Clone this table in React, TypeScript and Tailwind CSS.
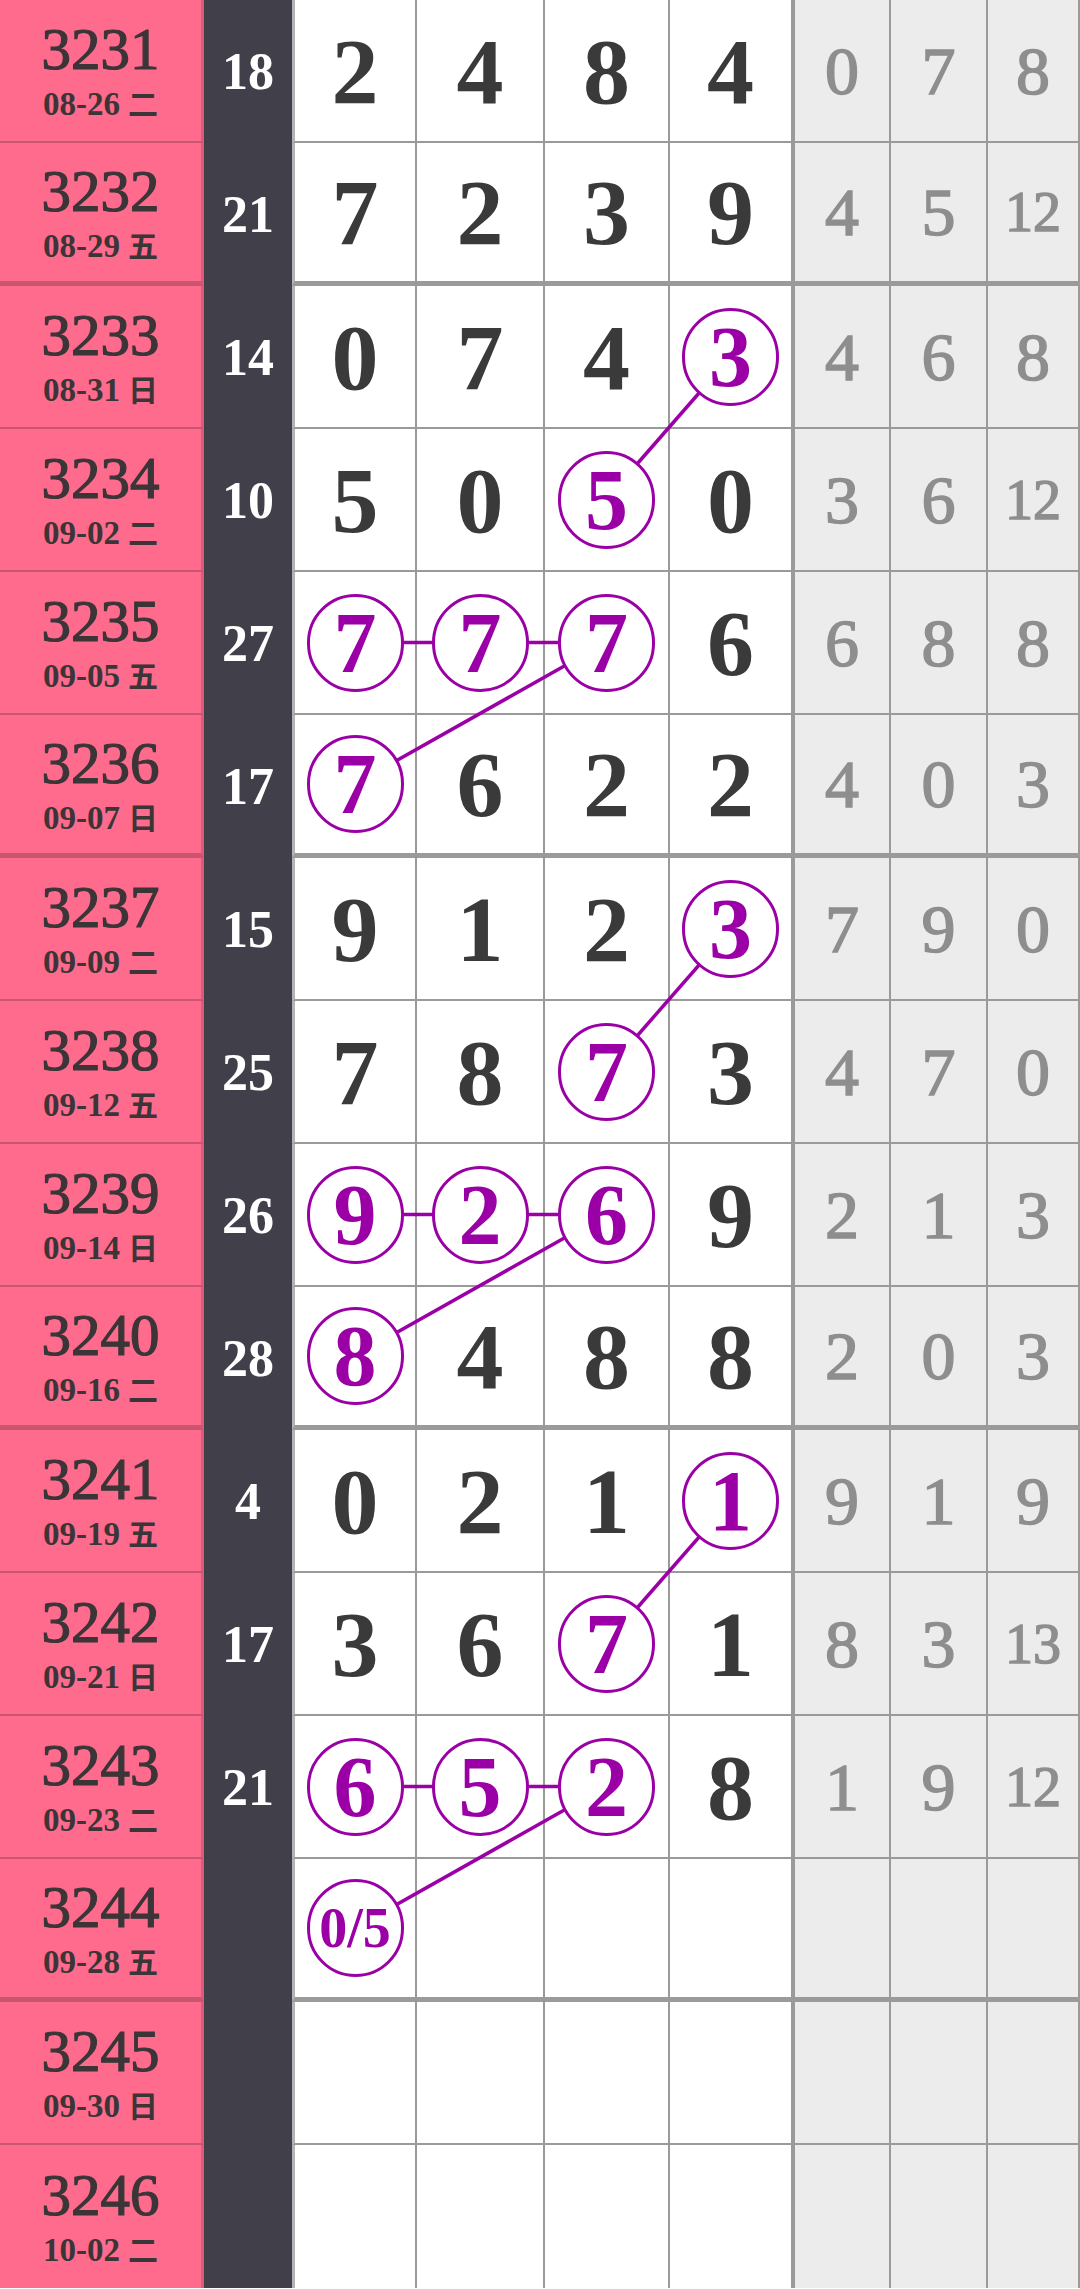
import React from "react";

type Row = { id: string; date: string; wd: string; s: string; d: string[]; g: string[] };

const rows: Row[] = [
  { id: "3231", date: "08-26", wd: "二", s: "18", d: ["2", "4", "8", "4"], g: ["0", "7", "8"] },
  { id: "3232", date: "08-29", wd: "五", s: "21", d: ["7", "2", "3", "9"], g: ["4", "5", "12"] },
  { id: "3233", date: "08-31", wd: "日", s: "14", d: ["0", "7", "4", "3"], g: ["4", "6", "8"] },
  { id: "3234", date: "09-02", wd: "二", s: "10", d: ["5", "0", "5", "0"], g: ["3", "6", "12"] },
  { id: "3235", date: "09-05", wd: "五", s: "27", d: ["7", "7", "7", "6"], g: ["6", "8", "8"] },
  { id: "3236", date: "09-07", wd: "日", s: "17", d: ["7", "6", "2", "2"], g: ["4", "0", "3"] },
  { id: "3237", date: "09-09", wd: "二", s: "15", d: ["9", "1", "2", "3"], g: ["7", "9", "0"] },
  { id: "3238", date: "09-12", wd: "五", s: "25", d: ["7", "8", "7", "3"], g: ["4", "7", "0"] },
  { id: "3239", date: "09-14", wd: "日", s: "26", d: ["9", "2", "6", "9"], g: ["2", "1", "3"] },
  { id: "3240", date: "09-16", wd: "二", s: "28", d: ["8", "4", "8", "8"], g: ["2", "0", "3"] },
  { id: "3241", date: "09-19", wd: "五", s: "4", d: ["0", "2", "1", "1"], g: ["9", "1", "9"] },
  { id: "3242", date: "09-21", wd: "日", s: "17", d: ["3", "6", "7", "1"], g: ["8", "3", "13"] },
  { id: "3243", date: "09-23", wd: "二", s: "21", d: ["6", "5", "2", "8"], g: ["1", "9", "12"] },
  { id: "3244", date: "09-28", wd: "五", s: "", d: ["0/5", "", "", ""], g: ["", "", ""] },
  { id: "3245", date: "09-30", wd: "日", s: "", d: ["", "", "", ""], g: ["", "", ""] },
  { id: "3246", date: "10-02", wd: "二", s: "", d: ["", "", "", ""], g: ["", "", ""] },
];

const circled: Record<string, boolean> = {
  "2-3": true,
  "3-2": true,
  "4-0": true,
  "4-1": true,
  "4-2": true,
  "5-0": true,
  "6-3": true,
  "7-2": true,
  "8-0": true,
  "8-1": true,
  "8-2": true,
  "9-0": true,
  "10-3": true,
  "11-2": true,
  "12-0": true,
  "12-1": true,
  "12-2": true,
  "13-0": true,
};

const links: [number, number, number, number][] = [
  [2, 3, 3, 2],
  [4, 0, 4, 1],
  [4, 1, 4, 2],
  [4, 2, 5, 0],
  [6, 3, 7, 2],
  [8, 0, 8, 1],
  [8, 1, 8, 2],
  [8, 2, 9, 0],
  [10, 3, 11, 2],
  [12, 0, 12, 1],
  [12, 1, 12, 2],
  [12, 2, 13, 0],
];

const ROW_H = 143;
const thick = (i: number) => i === 1 || i === 5 || i === 9 || i === 13;
const colX = [355, 480, 606, 731];
const rowY = (i: number) => ROW_H * i + (ROW_H - (thick(i) ? 5 : 2)) / 2;

const whiteW = ["w-[125px] border-l-[3px] border-l-[#b4b4b4] border-r-2", "w-[128px] border-r-2", "w-[125px] border-r-2", "w-[125px] border-r-4"];
const grayW = ["w-[96px] border-r-2", "w-[97px] border-r-2", "flex-1 border-r-2"];

function Circle({ v }: { v: string }) {
  const small = v.length > 1;
  return (
    <div className="relative z-10 flex h-[98px] w-[97px] items-center justify-center rounded-full border-[3.5px] border-[#9b00a6] bg-white">
      <span className={small ? "text-[56px] font-bold leading-none text-[#9b00a6]" : "text-[86px] font-bold leading-none text-[#9b00a6]"}>{v}</span>
    </div>
  );
}

export default function App() {
  return (
    <div className="relative w-[1080px] bg-white font-['Liberation_Serif','Noto_Sans_CJK_SC',serif]">
      {rows.map((r, i) => {
        const tb = thick(i);
        const last = i === rows.length - 1;
        const bw = last ? "border-b-0" : tb ? "border-b-[5px]" : "border-b-2";
        return (
          <div key={r.id} className="flex h-[143px]">
            <div className={`flex w-[204px] flex-col items-center justify-center gap-[9px] border-r-[3px] border-r-[#dc5a7a] bg-[#fe6b8d] border-b-[#c9566f] ${bw}`}>
              <span className="text-[59px] leading-none text-[#3b3538] [-webkit-text-stroke:1.2px_#3b3538]">{r.id}</span>
              <span className="flex items-baseline gap-[8px] text-[33px] font-bold leading-none text-[#3b3538]">
                <span>{r.date}</span>
                <span className="text-[30px] font-bold">{r.wd}</span>
              </span>
            </div>
            <div className="flex w-[88px] items-center justify-center bg-[#403f4a]">
              <span className="text-[52px] font-bold leading-none text-white">{r.s}</span>
            </div>
            {r.d.map((v, c) => (
              <div key={c} className={`flex items-center justify-center bg-white border-[#9a9a9a] border-l-[#b4b4b4] ${whiteW[c]} ${bw} border-b-[#9a9a9a]`}>
                {circled[`${i}-${c}`] ? (
                  <Circle v={v} />
                ) : (
                  <span className="text-[94px] font-bold leading-none text-[#3a3a3a]">{v}</span>
                )}
              </div>
            ))}
            {r.g.map((v, c) => (
              <div key={c} className={`flex items-center justify-center bg-[#ececec] border-[#9a9a9a] ${grayW[c]} ${bw}`}>
                <span className={v.length > 1 ? "text-[56px] leading-none text-[#8e8e8e] [-webkit-text-stroke:1.5px_#8e8e8e]" : "text-[68px] leading-none text-[#8e8e8e] [-webkit-text-stroke:1.5px_#8e8e8e]"}>{v}</span>
              </div>
            ))}
          </div>
        );
      })}
      <svg className="pointer-events-none absolute left-0 top-0" width={1080} height={2289}>
        {links.map(([r1, c1, r2, c2], k) => (
          <line key={k} x1={colX[c1]} y1={rowY(r1)} x2={colX[c2]} y2={rowY(r2)} stroke="#9b00a6" strokeWidth={3.5} />
        ))}
      </svg>
    </div>
  );
}
